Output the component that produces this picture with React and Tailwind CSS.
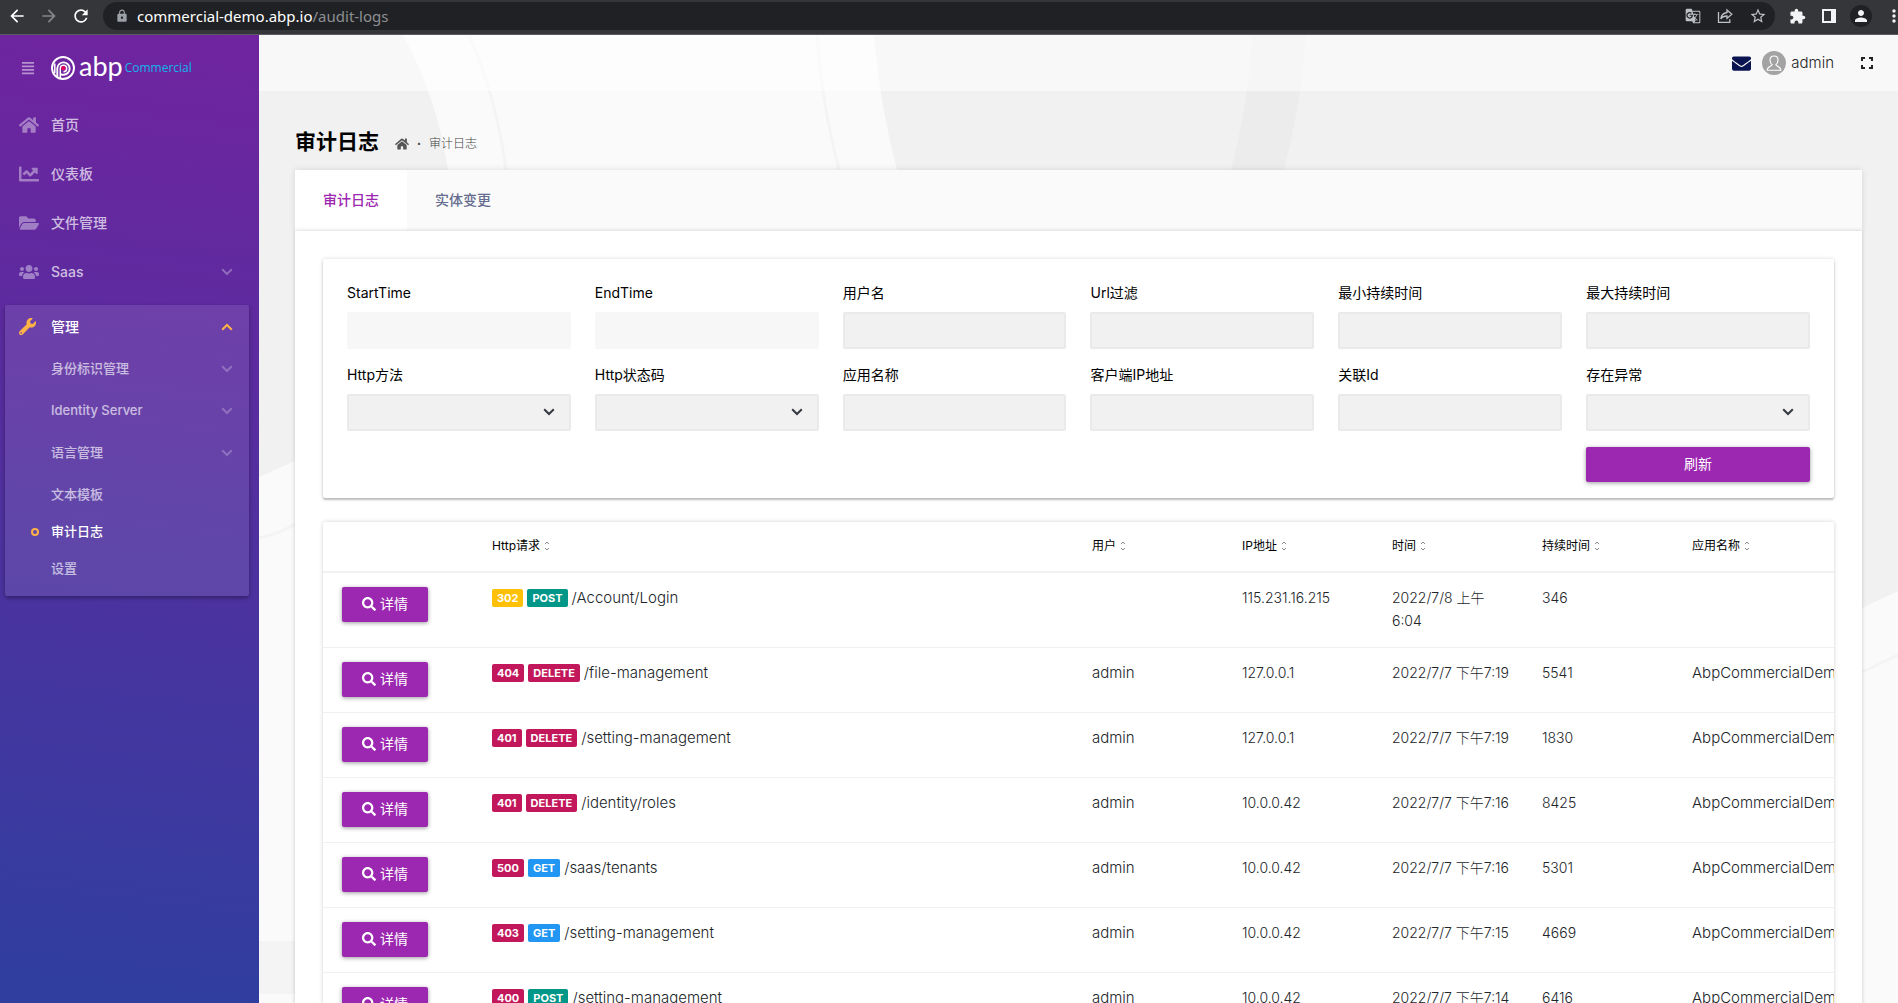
import { FaAlignJustify, FaChartLine, FaEnvelope, FaFolderOpen, FaHome, FaSearch, FaUsers, FaWrench } from 'react-icons/fa';
import { MdArrowBack, MdArrowForward, MdExtension, MdGTranslate, MdLock, MdMoreVert, MdPerson, MdRefresh, MdStarBorder } from 'react-icons/md';

const menuItems = [
  { label: '首页', icon: FaHome },
  { label: '仪表板', icon: FaChartLine },
  { label: '文件管理', icon: FaFolderOpen },
  { label: 'Saas', icon: FaUsers, expandable: true },
];

const adminGroups = ['身份标识管理', 'Identity Server', '语言管理'];
const adminPages = ['文本模板', '审计日志', '设置'];

const filters = [
  { id: 'startTime', label: 'StartTime', type: 'date' },
  { id: 'endTime', label: 'EndTime', type: 'date' },
  { id: 'userName', label: '用户名', type: 'text' },
  { id: 'url', label: 'Url过滤', type: 'text' },
  { id: 'minDuration', label: '最小持续时间', type: 'text' },
  { id: 'maxDuration', label: '最大持续时间', type: 'text' },
  { id: 'httpMethod', label: 'Http方法', type: 'select' },
  { id: 'httpStatus', label: 'Http状态码', type: 'select' },
  { id: 'appName', label: '应用名称', type: 'text' },
  { id: 'clientIp', label: '客户端IP地址', type: 'text' },
  { id: 'correlationId', label: '关联Id', type: 'text' },
  { id: 'hasException', label: '存在异常', type: 'select' },
];

const columns = ['Http请求', '用户', 'IP地址', '时间', '持续时间', '应用名称'];

const logs = [
  { status: 302, method: 'POST', url: '/Account/Login', user: '', ip: '115.231.16.215', time: '2022/7/8 上午6:04', duration: 346, app: '' },
  { status: 404, method: 'DELETE', url: '/file-management', user: 'admin', ip: '127.0.0.1', time: '2022/7/7 下午7:19', duration: 5541, app: 'AbpCommercialDemo' },
  { status: 401, method: 'DELETE', url: '/setting-management', user: 'admin', ip: '127.0.0.1', time: '2022/7/7 下午7:19', duration: 1830, app: 'AbpCommercialDemo' },
  { status: 401, method: 'DELETE', url: '/identity/roles', user: 'admin', ip: '10.0.0.42', time: '2022/7/7 下午7:16', duration: 8425, app: 'AbpCommercialDemo' },
  { status: 500, method: 'GET', url: '/saas/tenants', user: 'admin', ip: '10.0.0.42', time: '2022/7/7 下午7:16', duration: 5301, app: 'AbpCommercialDemo' },
  { status: 403, method: 'GET', url: '/setting-management', user: 'admin', ip: '10.0.0.42', time: '2022/7/7 下午7:15', duration: 4669, app: 'AbpCommercialDemo' },
  { status: 400, method: 'POST', url: '/setting-management', user: 'admin', ip: '10.0.0.42', time: '2022/7/7 下午7:14', duration: 6416, app: 'AbpCommercialDemo' },
];

const methodColors = {
  GET: 'bg-[#2196f3]',
  POST: 'bg-[#009688]',
  DELETE: 'bg-[#c2185b]',
};

function Chevron({ className }) {
  return (
    <svg viewBox="0 0 12 8" className={className} fill="none" stroke="currentColor" strokeWidth="2">
      <path d="M1.2 1.2 6 6l4.8-4.8" />
    </svg>
  );
}

function BrowserBar() {
  return (
    <div className="h-[35px] shrink-0 flex items-start bg-[#35363a] border-b border-[#5c5a60] pt-0.5 overflow-hidden">
      <div className="w-[103px] h-7 shrink-0 flex items-center gap-3 pl-[7px]">
        <button aria-label="Back"><MdArrowBack className="size-5 text-white" /></button>
        <button aria-label="Forward"><MdArrowForward className="size-5 text-[#86878a]" /></button>
        <button aria-label="Reload"><MdRefresh className="size-5 text-white" /></button>
      </div>
      <div className="flex-1 h-7 rounded-full bg-[#202124] flex items-center pl-3 pr-2 text-[#bdc1c6]">
        <MdLock className="size-3.5 text-[#9aa0a6]" />
        <p className="flex-1 pl-2 text-[15px] leading-5 font-['Noto_Sans',sans-serif] text-[#8d9095]">
          <span className="text-white">commercial-demo.abp.io</span>/audit-logs
        </p>
        <div className="flex items-center gap-4">
          <button aria-label="Translate"><MdGTranslate className="size-4" /></button>
          <button aria-label="Share">
            <svg viewBox="0 0 16 16" className="size-4" fill="none" stroke="currentColor" strokeWidth="1.3">
              <path d="M1.500 4v10.300h11.300v-3" />
              <path d="M10 2l4.800 4.200L10 10.400V8C7 8 5 9 3.800 11 4.200 7.200 6.500 5 10 4.500z" />
            </svg>
          </button>
          <button aria-label="Bookmark"><MdStarBorder className="size-[18px]" /></button>
        </div>
      </div>
      <div className="w-[123px] h-7 shrink-0 flex items-center pl-3.5 text-[#f1f3f4]">
        <button aria-label="Extensions"><MdExtension className="size-[17px]" /></button>
        <button aria-label="Side panel" className="ml-4">
          <svg viewBox="0 0 14 14" className="size-3.5">
            <path d="M0 0h14v14H0zM2 2v10h7V2z" fill="currentColor" fillRule="evenodd" />
          </svg>
        </button>
        <button aria-label="Profile" className="ml-3.5 size-[22px] shrink-0 rounded-full bg-[#202124] flex items-center justify-center">
          <MdPerson className="size-[18px]" />
        </button>
        <button aria-label="Menu" className="ml-3 shrink-0"><MdMoreVert className="size-5" /></button>
      </div>
    </div>
  );
}

function Logo() {
  return (
    <a href="#" className="flex items-center text-white">
      <svg viewBox="0 0 24 24" className="size-6" fill="none" stroke="currentColor">
        <circle cx="12" cy="12" r="11" strokeWidth="1.900" />
        <path d="M3.800 17V7.500" strokeWidth="1.500" />
        <path d="M6.300 21V12a6.200 6.200 0 1 1 6.200 6.800c-1.200 0-2.100-.2-2.900-.7" strokeWidth="1.900" />
        <path d="M9.300 22V12.500a3.200 3.200 0 1 1 3.200 3.200" strokeWidth="1.500" />
        <circle cx="12.300" cy="12.200" r="2.100" fill="#e8005a" stroke="none" />
      </svg>
      <span className="pl-1 pb-1 text-[27px] leading-6 font-['Lato',sans-serif]">abp</span>
      <span className="pl-0.5 text-xs leading-6 text-[#12b5ee] font-['Open_Sans',sans-serif]">Commercial</span>
    </a>
  );
}

function Sidebar() {
  return (
    <aside className="w-[259px] shrink-0 bg-[linear-gradient(187deg,#70249f_0%,#5a2c9f_35%,#303e9f_97%)] text-white">
      <div className="h-[65px] flex items-center pl-[21px] gap-4">
        <button aria-label="Toggle menu"><FaAlignJustify className="size-3.5 text-white/50" /></button>
        <Logo />
      </div>
      <nav>
        <ul className="text-sm text-white/70">
          {menuItems.map(({ label, icon: Icon, expandable }) => (
            <li key={label}>
              <a href="#" className="h-[49px] flex items-center pl-[19px] pr-[26px] font-medium">
                <span className="w-8 shrink-0"><Icon className="size-5 text-white/40" /></span>
                <span className="flex-1">{label}</span>
                {expandable && <Chevron className="w-3 text-white/30" />}
              </a>
            </li>
          ))}
        </ul>
        <div className="mt-[9px] ml-[5px] mr-2.5 pb-[9px] rounded-xs bg-white/10 shadow-[0_2px_4px_rgba(0,0,0,0.35)]">
          <a href="#" className="h-[43px] flex items-center pl-3.5 pr-4 text-sm font-medium">
            <span className="w-8 shrink-0"><FaWrench className="size-[17px] text-[#ffb347]" /></span>
            <span className="flex-1">管理</span>
            <Chevron className="w-3 rotate-180 text-[#ffb347]" />
          </a>
          <ul className="mb-0.5 text-[13px] font-medium text-white/65">
            {adminGroups.map((label) => (
              <li key={label}>
                <a href="#" className="h-[42px] flex items-center justify-between pl-[46px] pr-4">
                  {label}
                  <Chevron className="w-3 text-white/25" />
                </a>
              </li>
            ))}
          </ul>
          <ul className="text-[13px] font-medium">
            {adminPages.map((label) => {
              const active = label === '审计日志';
              return (
                <li key={label}>
                  <a href="#" className={active ? 'h-[37px] flex items-center pl-[26px] text-white' : 'h-[37px] flex items-center pl-[46px] text-white/65'}>
                    {active && <span className="size-2 mr-3 rounded-full border-2 border-[#ffb347]" />}
                    {label}
                  </a>
                </li>
              );
            })}
          </ul>
        </div>
      </nav>
    </aside>
  );
}

function Backdrop() {
  return (
    <svg className="absolute inset-0 size-full" viewBox="0 0 1639 968" preserveAspectRatio="xMinYMin slice" fill="none">
      <path d="M144 0Q178 62 189 135V300H676L638 135Q620 66 615 0Z" fill="#fafafa" />
      <path d="M210 0Q238 65 247 135M558 0Q562 66 580 135" stroke="#f4f4f4" strokeWidth="3" />
      <path d="M993 0H1047Q1043 66 1025 135H972Q990 66 993 0Z" fill="#ececec" />
      <path d="M0 442L36 426H200V906H0Z" fill="#fafafa" />
      <path d="M0 503Q20 499 36 489" stroke="#f4f4f4" strokeWidth="3" />
      <path d="M0 906H200V959H0Z" fill="#f4f4f4" />
      <path d="M0 959H200V968H0Z" fill="#fafafa" />
      <path d="M1603 573L1639 556V968H1500V600Z" fill="#fafafa" />
      <path d="M1603 637L1639 620" stroke="#f4f4f4" strokeWidth="3" />
    </svg>
  );
}

function TopBar() {
  return (
    <header className="relative h-14 flex items-center justify-end pr-[25px] bg-white/50">
      <button aria-label="Messages"><FaEnvelope className="size-[19px] text-[#0a1450]" /></button>
      <button className="ml-[11px] flex items-center gap-[5px] text-[15px] font-light text-[#222]">
        <svg viewBox="0 0 24 24" className="size-6" fill="none" stroke="#fff" strokeWidth="1.100">
          <circle cx="12" cy="12" r="12" fill="#a3a3a3" stroke="none" />
          <path d="M10.200 13.800C8.600 12.600 8 10.800 8 8.900 8 6.400 9.600 5 12 5s4 1.400 4 3.900c0 1.900-.6 3.700-2.200 4.900 0 1.400 5 1.300 5 5.400H5.200c0-4.100 5-4 5-5.400z" />
        </svg>
        admin
      </button>
      <button aria-label="Fullscreen" className="ml-[27px]">
        <svg viewBox="0 0 12 12" className="size-3" fill="none" stroke="#222" strokeWidth="2">
          <path d="M1 4V1h3M8 1h3v3M11 8v3H8M4 11H1V8" />
        </svg>
      </button>
    </header>
  );
}

function FilterField({ id, label, type }) {
  return (
    <div>
      <label htmlFor={id} className="block mb-[9px] text-sm leading-5 text-black">{label}</label>
      {type === 'select' ? (
        <div className="relative">
          <select id={id} className="block w-full h-[37px] px-3 appearance-none rounded-xs border-2 border-[#eaeaea] bg-[#f1f1f1]">
            <option value=""></option>
          </select>
          <Chevron className="absolute right-4 top-3.5 w-3 text-[#343a40] pointer-events-none" />
        </div>
      ) : (
        <input
          id={id}
          type="text"
          className={
            type === 'date'
              ? 'block w-full h-[37px] px-3 rounded-xs bg-[#f7f7f7]'
              : 'block w-full h-[37px] px-3 rounded-xs border-2 border-[#eaeaea] bg-[#f1f1f1]'
          }
        />
      )}
    </div>
  );
}

function LogTable() {
  return (
    <div className="mt-6 overflow-hidden rounded-xs bg-white shadow-[0_0_4px_rgba(0,0,0,0.18)]">
      <table className="w-[1650px] table-fixed text-left text-sm font-light text-[#212529]">
        <colgroup>
          <col className="w-[150px]" />
          <col className="w-[600px]" />
          <col className="w-[150px]" />
          <col className="w-[150px]" />
          <col className="w-[150px]" />
          <col className="w-[150px]" />
          <col />
        </colgroup>
        <thead>
          <tr className="h-[50px] border-b-2 border-[#f1f1f1] text-xs text-black">
            <th aria-label="操作" />
            {columns.map((column) => (
              <th key={column} className="px-[19px] pb-px font-normal">
                <span className="flex items-center gap-1">
                  {column}
                  <svg viewBox="0 0 6 10" className="w-1.5" fill="none" stroke="#888">
                    <path d="M1 3l2-2 2 2M1 7l2 2 2-2" />
                  </svg>
                </span>
              </th>
            ))}
          </tr>
        </thead>
        <tbody>
          {logs.map((log, i) => (
            <tr key={i} className="h-[65px] border-b border-[#f1f1f1] align-top leading-[23px]">
              <td className="pt-3.5 pl-[19px]">
                <button className="w-[86px] h-[35px] flex items-center justify-center gap-1 pb-0.5 rounded-xs bg-[#9c27b0] text-sm font-normal text-white shadow-[0_1px_4px_rgba(0,0,0,0.4)]">
                  <FaSearch className="size-3.5" />
                  详情
                </button>
              </td>
              <td className="px-[19px] pt-[13px]">
                <div className="flex items-center gap-1">
                  <span className={`px-[5px] rounded-xs text-[11px] leading-[18px] font-bold text-white ${log.status === 302 ? 'bg-[#ffc107]' : 'bg-[#c2185b]'}`}>
                    {log.status}
                  </span>
                  <span className={`px-[5px] rounded-xs text-[11px] leading-[18px] font-bold text-white ${methodColors[log.method]}`}>
                    {log.method}
                  </span>
                  <span className="text-[15px]">{log.url}</span>
                </div>
              </td>
              <td className="px-[19px] pt-[13px] text-[15px]">{log.user}</td>
              <td className="px-[19px] pt-[13px]">{log.ip}</td>
              <td className={i === 0 ? 'px-[19px] pt-[13px] pb-[15px]' : 'pl-[19px] pt-[13px] whitespace-nowrap'}>{log.time}</td>
              <td className="px-[19px] pt-[13px]">{log.duration}</td>
              <td className="px-[19px] pt-[13px] text-[15px]">{log.app}</td>
            </tr>
          ))}
        </tbody>
      </table>
    </div>
  );
}

export default function App() {
  return (
    <div className="h-screen flex flex-col overflow-hidden font-['Inter','Noto_Sans_CJK_SC',sans-serif]">
      <BrowserBar />
      <div className="flex-1 min-h-0 flex">
        <Sidebar />
        <div className="relative flex-1 min-w-0 overflow-y-auto [scrollbar-width:none] bg-[#f1f1f1]">
          <Backdrop />
          <TopBar />
          <main className="relative pl-9 pr-9">
            <div className="h-[79px] flex items-center pt-[22px]">
              <h1 className="text-[21px] leading-8 font-bold text-black">审计日志</h1>
              <nav aria-label="Breadcrumb" className="flex items-center pl-4 pt-1 text-xs font-light text-[#444]">
                <a href="#" aria-label="首页"><FaHome className="size-3.5 text-[#555]" /></a>
                <span className="w-5 text-center text-[8px]">•</span>
                <span>审计日志</span>
              </nav>
            </div>
            <div className="flex bg-[#fafafa] text-sm font-medium shadow-[0_0_6px_rgba(0,0,0,0.12)]">
              <button className="h-[61px] px-7 pb-0.5 bg-white text-[#9c27b0]">审计日志</button>
              <button className="h-[61px] px-7 pb-0.5 text-[#666c8f]">实体变更</button>
            </div>
            <section className="relative p-7 bg-white shadow-[0_0_4px_rgba(0,0,0,0.2)]">
              <form className="grid grid-cols-6 gap-x-6 gap-y-4 px-6 pt-6 pb-4 rounded-xs bg-white shadow-[0_0_4px_rgba(0,0,0,0.15),0_2px_2px_rgba(0,0,0,0.22)]">
                {filters.map((filter) => (
                  <FilterField key={filter.id} {...filter} />
                ))}
                <button type="button" className="col-start-6 h-[35px] pb-0.5 rounded-xs bg-[#9c27b0] text-sm text-white shadow-[0_1px_4px_rgba(0,0,0,0.4)]">
                  刷新
                </button>
              </form>
              <LogTable />
            </section>
          </main>
        </div>
      </div>
    </div>
  );
}
